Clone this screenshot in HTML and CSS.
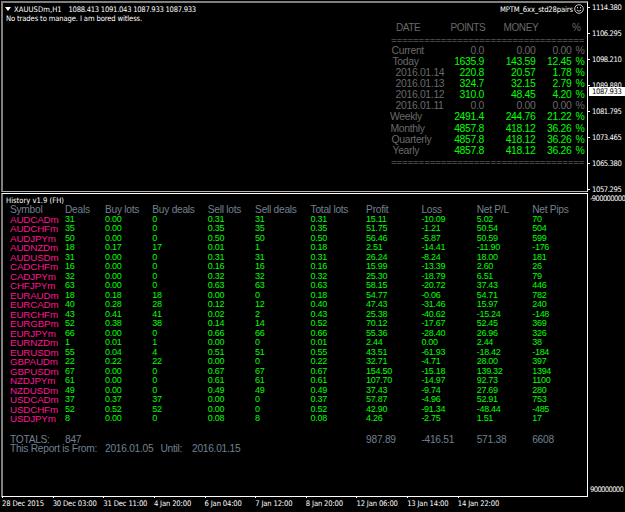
FILE: index.html
```html
<!DOCTYPE html>
<html lang="en">
<head>
    <meta charset="UTF-8">
    <title>XAUUSDm,H1</title>
    <link rel="stylesheet" href="styles.css">
</head>
<body>
    <div class="terminal">
        <div class="charts">
            <div class="price-chart">
                <div class="title-bar">
                    <svg class="arrow" width="6" height="4" viewBox="0 0 6 4"><path d="M0 0h6L3 4z" fill="#fff"/></svg>
                    <span class="symbol">XAUUSDm,H1</span>
                    <span class="quotes">1088.413 1091.043 1087.933 1087.933</span>
                    <span class="expert">MPTM_6xx_std28pairs</span>
                    <svg class="smiley" width="10" height="10" viewBox="0 0 10 10" fill="none" stroke="#fff">
                        <circle cx="5" cy="5" r="4.3" stroke-width=".8"/>
                        <path d="M3.5 3v1.3M6.5 3v1.3M2.8 6.1Q5 8.3 7.2 6.1" stroke-width=".8"/>
                    </svg>
                </div>
                <div class="comment">No trades to manage. I am bored witless.</div>
                <div class="summary">
                    <div class="summary-head"><span>DATE</span><span>POINTS</span><span>MONEY</span><span>%</span></div>
                    <div class="rule">===================================</div>
                    <div id="summaryRows"></div>
                    <div class="rule">===================================</div>
                </div>
            </div>
            <div class="history">
                <div class="history-title">History v1.9 (FH)</div>
                <div class="deal-row head"><span>Symbol</span><span>Deals</span><span>Buy lots</span><span>Buy deals</span><span>Sell lots</span><span>Sell deals</span><span>Total lots</span><span>Profit</span><span>Loss</span><span>Net P/L</span><span>Net Pips</span></div>
                <div id="dealRows"></div>
                <div class="deal-row totals"><span>TOTALS:</span><span>847</span><span></span><span></span><span></span><span></span><span></span><span>987.89</span><span>-416.51</span><span>571.38</span><span>6608</span></div>
                <div class="report"><span>This Report is From:</span><span>2016.01.05</span><span>Until:</span><span>2016.01.15</span></div>
            </div>
        </div>
        <div class="scale">
            <div class="prices">
                <span>1114.380</span><span>1106.295</span><span>1098.210</span><span>1089.880</span><span>1081.795</span><span>1073.465</span><span>1065.380</span><span>1057.295</span>
                <div class="current-price">1087.933</div>
            </div>
            <div class="indicator-scale"><span>-900000000</span><span>900000000</span></div>
        </div>
    </div>
    <div class="dates">
        <span>28 Dec 2015</span><span>30 Dec 03:00</span><span>31 Dec 11:00</span><span>4 Jan 20:00</span><span>6 Jan 04:00</span><span>7 Jan 12:00</span><span>8 Jan 20:00</span><span>12 Jan 06:00</span><span>13 Jan 14:00</span><span>14 Jan 22:00</span>
    </div>
    <script src="script.js"></script>
</body>
</html>
```
FILE: styles.css
```css
* {
    box-sizing: border-box;
}
body {
    margin: 0;
    width: 625px;
    height: 512px;
    overflow: hidden;
    background: #000;
    color: #fff;
    font-family: "DejaVu Sans Condensed", "DejaVu Sans", sans-serif;
    font-stretch: condensed;
    font-size: 7.6px;
    white-space: nowrap;
}
.terminal {
    display: flex;
    height: 496px;
    padding-top: 1px;
}
.charts {
    width: 588px;
    padding-left: 1px;
}
.price-chart {
    height: 191px;
    border: 2px solid #808080;
    border-right: 1px solid #fff;
    border-bottom: 1px solid #b0b0b0;
}
.title-bar {
    display: flex;
    align-items: center;
    height: 11px;
    padding: 1px 3px 0 2px;
}
.symbol {
    margin-left: 3px;
    width: 54.5px;
    letter-spacing: 0.05px;
}
.quotes {
    letter-spacing: -0.27px;
}
.expert {
    margin-left: auto;
    letter-spacing: -0.12px;
}
.smiley {
    margin-left: 1px;
}
.comment {
    padding-left: 3px;
    line-height: 9px;
    letter-spacing: -0.13px;
}
.summary {
    width: 196px;
    margin: -1px 1px 0 auto;
    font-family: "Liberation Sans", Arial, sans-serif;
    font-size: 10.4px;
    line-height: 11.06px;
    letter-spacing: -0.32px;
    color: #696969;
}
.summary-head, .summary-row {
    display: grid;
    grid-template-columns: 43px 51px 51.5px 36px 13px;
}
.summary-head {
    grid-template-columns: 54.5px 53px 68.5px 14px;
    padding-left: 6px;
    height: 12px;
    font-size: 10px;
    letter-spacing: -0.4px;
}
.summary-row span:not(:first-child) {
    text-align: right;
}
.summary-row.gain span:not(:first-child) {
    color: #00ff00;
}
.rule {
    padding-left: 1px;
    font-size: 9.8px;
    letter-spacing: -0.2px;
    color: #7c7c7c;
}
.history {
    height: 304px;
    margin-top: 1px;
    border: 1px solid #fff;
    border-left: 2px solid #808080;
    padding-top: 2px;
}
.history-title {
    height: 9px;
    padding-left: 3px;
    line-height: 9px;
}
.deal-row {
    display: grid;
    grid-template-columns: 55px 40px 47.3px 55.5px 47.3px 55.5px 55.5px 55.3px 55.3px 55.5px 50px;
    padding-left: 7px;
    height: 9.5px;
    line-height: 9.5px;
    font-family: "Liberation Sans", Arial, sans-serif;
    font-size: 9px;
    letter-spacing: -0.28px;
    color: #00ff00;
}
.deal-row span:first-child {
    font-size: 9.8px;
    letter-spacing: -0.15px;
    color: #ff1493;
}
.deal-row.head, .deal-row.totals, .deal-row.totals span:first-child, .deal-row.head span:first-child, .report {
    font-size: 10.2px;
    letter-spacing: -0.26px;
    color: #708090;
}
.deal-row.totals {
    margin-top: 11px;
}
.report {
    display: grid;
    grid-template-columns: 95px 55.5px 31.5px 60px;
    padding-left: 7px;
    line-height: 10px;
    font-family: "Liberation Sans", Arial, sans-serif;
}
.scale {
    width: 37px;
}
.prices {
    position: relative;
    display: flex;
    flex-direction: column;
    height: 192px;
}
.prices span {
    display: flex;
    align-items: center;
    height: 12px;
    margin-bottom: 14.1px;
    flex: none;
    letter-spacing: -0.4px;
}
.prices span::before {
    content: "";
    width: 2px;
    height: 1px;
    margin-right: 2px;
    background: #fff;
}
.current-price {
    position: absolute;
    left: 1px;
    top: 86px;
    width: 36px;
    height: 9px;
    padding-left: 3px;
    background: #fff;
    color: #000;
    line-height: 9px;
    letter-spacing: -0.4px;
}
.indicator-scale {
    display: flex;
    flex-direction: column;
    justify-content: space-between;
    height: 301px;
    padding: 1px 0 0 2px;
    line-height: 9px;
    letter-spacing: -0.65px;
}
.dates {
    display: grid;
    grid-template-columns: repeat(10, 50.65px);
    padding-left: 2px;
}
.dates span {
    padding-top: 3px;
    line-height: 9px;
    background: linear-gradient(#fff, #fff) 0 0 / 1px 2px no-repeat;
    letter-spacing: -0.16px;
}
```
FILE: script.js
```js
const summary = [
    ['Current', 1.5, '0.0', '0.00', '0.00'],
    ['Today', 2.5, '1635.9', '143.59', '12.45'],
    ['2016.01.14', 5.5, '220.8', '20.57', '1.78'],
    ['2016.01.13', 5.5, '324.7', '32.15', '2.79'],
    ['2016.01.12', 5.5, '310.0', '48.45', '4.20'],
    ['2016.01.11', 5.5, '0.0', '0.00', '0.00'],
    ['Weekly', 0, '2491.4', '244.76', '21.22'],
    ['Monthly', 0.5, '4857.8', '418.12', '36.26'],
    ['Quarterly', 1.5, '4857.8', '418.12', '36.26'],
    ['Yearly', 2.5, '4857.8', '418.12', '36.26']
];

const deals = `AUDCADm 31 0.00 0 0.31 31 0.31 15.11 -10.09 5.02 70
AUDCHFm 35 0.00 0 0.35 35 0.35 51.75 -1.21 50.54 504
AUDJPYm 50 0.00 0 0.50 50 0.50 56.46 -5.87 50.59 599
AUDNZDm 18 0.17 17 0.01 1 0.18 2.51 -14.41 -11.90 -176
AUDUSDm 31 0.00 0 0.31 31 0.31 26.24 -8.24 18.00 181
CADCHFm 16 0.00 0 0.16 16 0.16 15.99 -13.39 2.60 26
CADJPYm 32 0.00 0 0.32 32 0.32 25.30 -18.79 6.51 79
CHFJPYm 63 0.00 0 0.63 63 0.63 58.15 -20.72 37.43 446
EURAUDm 18 0.18 18 0.00 0 0.18 54.77 -0.06 54.71 782
EURCADm 40 0.28 28 0.12 12 0.40 47.43 -31.46 15.97 240
EURCHFm 43 0.41 41 0.02 2 0.43 25.38 -40.62 -15.24 -148
EURGBPm 52 0.38 38 0.14 14 0.52 70.12 -17.67 52.45 369
EURJPYm 66 0.00 0 0.66 66 0.66 55.36 -28.40 26.96 326
EURNZDm 1 0.01 1 0.00 0 0.01 2.44 0.00 2.44 38
EURUSDm 55 0.04 4 0.51 51 0.55 43.51 -61.93 -18.42 -184
GBPAUDm 22 0.22 22 0.00 0 0.22 32.71 -4.71 28.00 397
GBPUSDm 67 0.00 0 0.67 67 0.67 154.50 -15.18 139.32 1394
NZDJPYm 61 0.00 0 0.61 61 0.61 107.70 -14.97 92.73 1100
NZDUSDm 49 0.00 0 0.49 49 0.49 37.43 -9.74 27.69 280
USDCADm 37 0.37 37 0.00 0 0.37 57.87 -4.96 52.91 753
USDCHFm 52 0.52 52 0.00 0 0.52 42.90 -91.34 -48.44 -485
USDJPYm 8 0.00 0 0.08 8 0.08 4.26 -2.75 1.51 17`;

document.getElementById('summaryRows').innerHTML = summary.map(([label, indent, points, money, pct]) =>
    `<div class="summary-row ${points === '0.0' ? '' : 'gain'}">
        <span style="padding-left: ${indent}px">${label}</span><span>${points}</span><span>${money}</span><span>${pct}</span><span>%</span>
    </div>`).join('');

document.getElementById('dealRows').innerHTML = deals.split('\n').map(line =>
    `<div class="deal-row">${line.split(' ').map(cell => `<span>${cell}</span>`).join('')}</div>`).join('');
```
